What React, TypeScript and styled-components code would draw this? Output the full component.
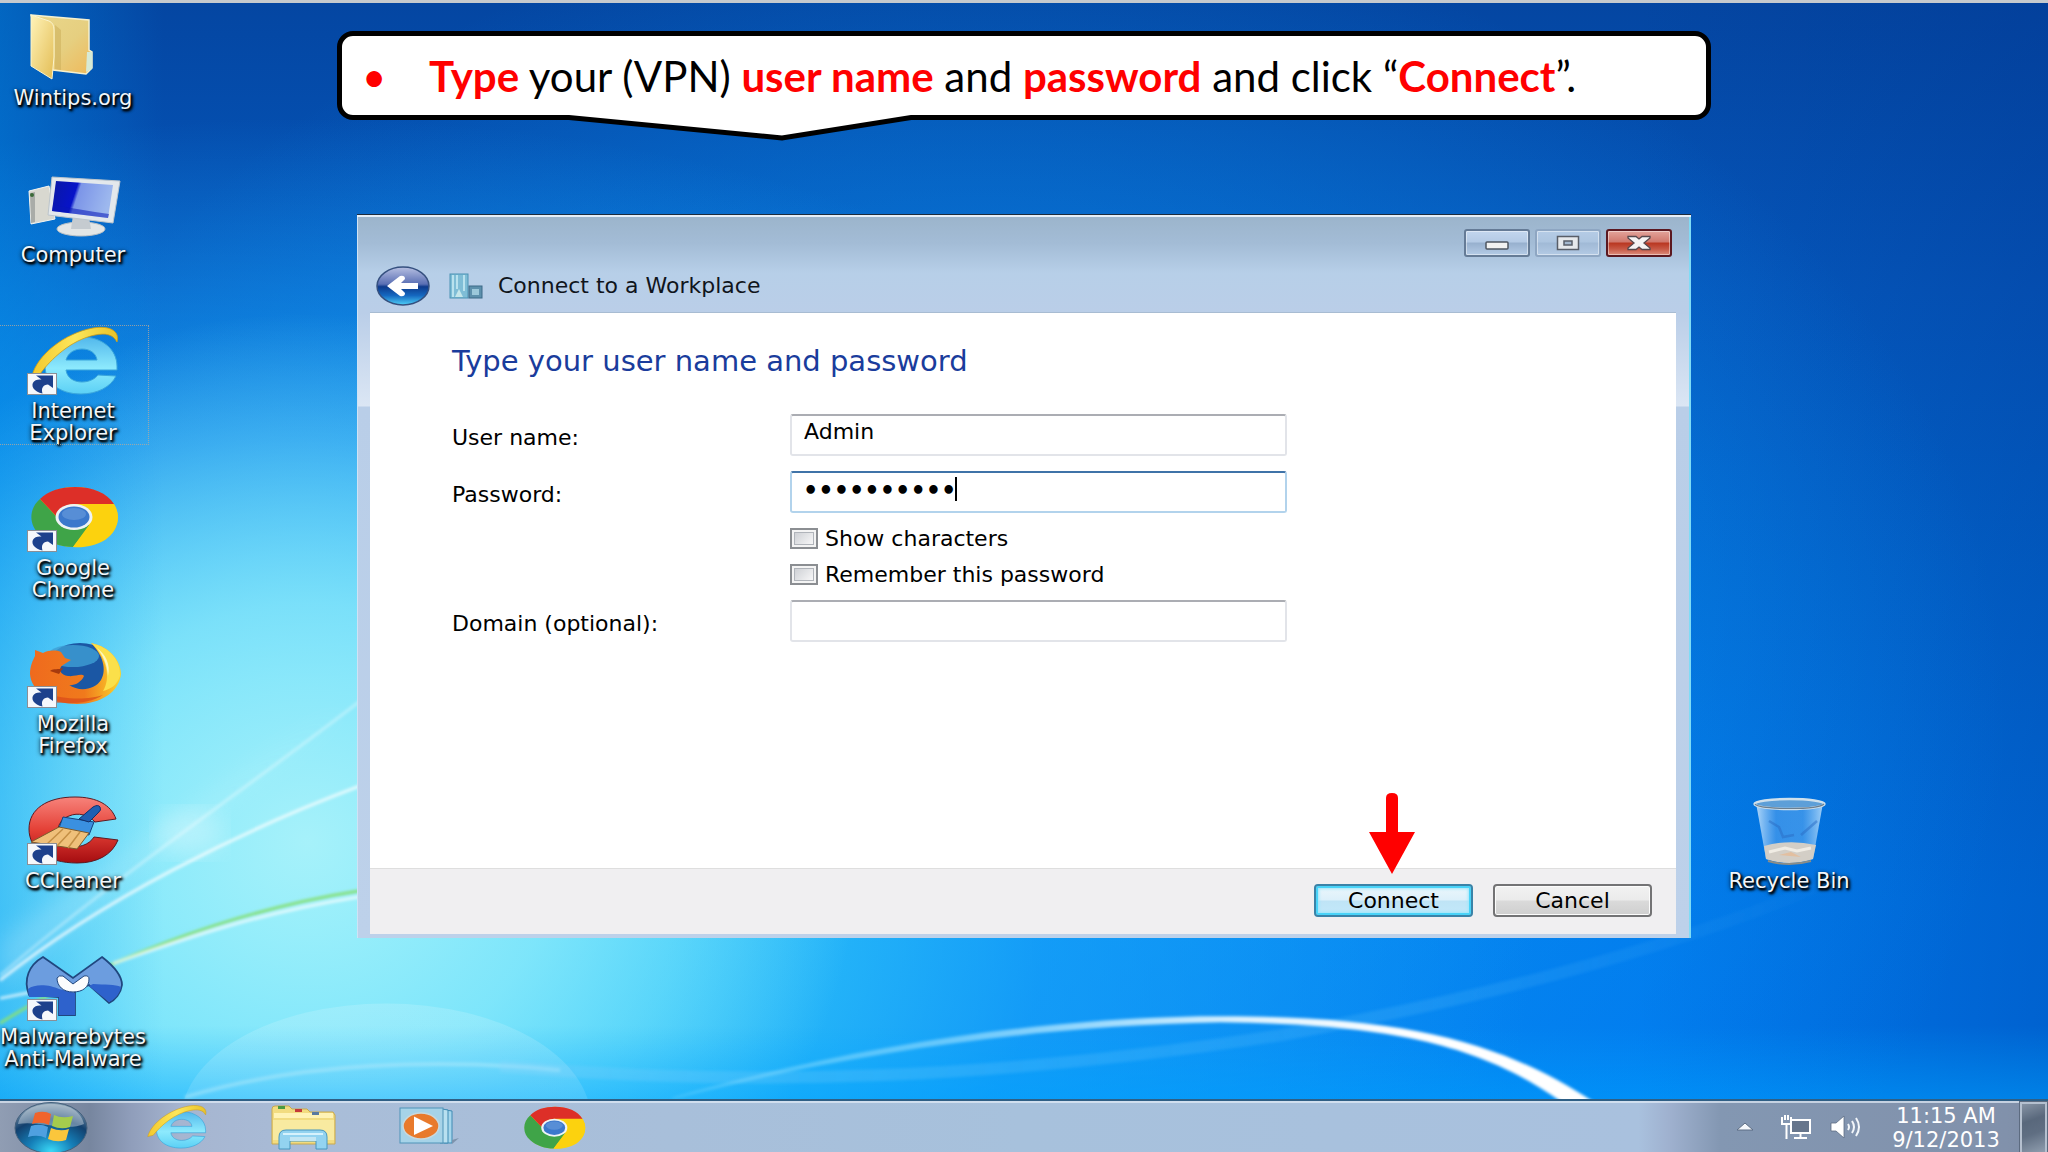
import React from 'react';
import styled, { createGlobalStyle, css } from 'styled-components';

const uiFont = '"DejaVu Sans", Verdana, sans-serif';

const GlobalStyle = createGlobalStyle`
  *, *::before, *::after { box-sizing: border-box; }
  body { margin: 0; font-family: ${uiFont}; }
`;

/* ---------- Desktop ---------- */

const Screen = styled.div`
  position: relative;
  display: flex;
  flex-direction: column;
  min-height: 100vh;
  overflow: hidden;
  isolation: isolate;
  border-top: 3px solid #c6cace;
  background:
    linear-gradient(90deg, rgba(0, 150, 240, 0.4) 0%, rgba(0, 150, 240, 0) 8%),
    linear-gradient(0deg, rgba(0, 165, 255, 0.5) 4%, rgba(0, 165, 255, 0) 11%),
    radial-gradient(ellipse 27% 46% at 15% 73%, rgba(178, 245, 250, 0.9) 0%, rgba(150, 238, 251, 0.75) 45%, rgba(100, 222, 250, 0) 100%),
    radial-gradient(ellipse 60% 70% at 15% 80%, rgba(60, 214, 252, 1) 0%, rgba(50, 200, 250, 0.95) 30%, rgba(26, 165, 250, 0.65) 60%, rgba(0, 130, 235, 0) 100%),
    radial-gradient(ellipse 50% 70% at 48% 62%, rgba(10, 150, 245, 0.9) 0%, rgba(10, 130, 235, 0) 100%),
    linear-gradient(90deg, rgba(0, 40, 120, 0) 80%, rgba(0, 50, 140, 0.3) 100%),
    linear-gradient(180deg, #0446a2 0%, #0558bd 25%, #0268d2 50%, #0076ea 78%, #0078f0 100%);
`;

const Wallpaper = styled.svg`
  position: absolute;
  inset: 0;
  width: 100%;
  height: 100%;
  z-index: -1;
`;

const Desktop = styled.main`
  flex: 1;
  display: grid;
  grid-template-columns: minmax(149px, 1fr) minmax(0, 1374px) minmax(154px, 1fr);
`;

const IconColumn = styled.nav<{ $indent?: number }>`
  display: grid;
  grid-template-rows: repeat(7, minmax(130px, 1fr));
  grid-template-columns: 149px;
  padding-left: ${(p) => p.$indent ?? 0}px;
`;

const Shortcut = styled.a<{ $selected?: boolean; $row?: number }>`
  display: flex;
  flex-direction: column;
  align-items: center;
  gap: 3px;
  padding-top: 9px;
  padding-right: 3px;
  color: #fff;
  text-decoration: none;
  position: relative;
  ${(p) => p.$row && css`grid-row: ${p.$row};`}
  ${(p) =>
    p.$selected &&
    css`
      &::after {
        content: '';
        position: absolute;
        inset: 9px 0 28px -2px;
        border: 1px dotted rgba(190, 170, 150, 0.75);
      }
    `}
`;

const ShortcutLabel = styled.span`
  font-size: 21px;
  line-height: 22px;
  text-align: center;
  white-space: pre;
  color: #f2f6fa;
  text-shadow: 1px 2px 2px #000, 2px 2px 3px #000, 0 1px 4px rgba(0, 0, 0, 0.8);
`;

const Stage = styled.section`
  display: flex;
  flex-direction: column;
  align-items: center;
  gap: 94px;
  padding: 28px 0 24px;
`;

/* ---------- Callout ---------- */

const Callout = styled.div`
  position: relative;
  width: 100%;
  min-height: 89px;
  display: flex;
  align-items: center;
  padding: 0 20px;
  background: #fff;
  border: 5px solid #000;
  border-radius: 16px;
`;

const CalloutList = styled.ul`
  margin: 0;
  padding: 0;
  list-style: none;
  font-family: Lato, Carlito, Calibri, sans-serif;
  font-size: 42px;
  line-height: 48px;
  color: #000;
`;

const CalloutItem = styled.li`
  display: flex;
  &::before {
    content: '•';
    flex: none;
    width: 67px;
    color: #f00;
  }
`;

const Key = styled.b`
  color: #f00;
  font-weight: 700;
`;

const CalloutTail = styled.svg`
  position: absolute;
  left: 222px;
  top: 76px;
`;

/* ---------- Dialog ---------- */

const Dialog = styled.section`
  position: relative;
  width: calc(100% - 40px);
  padding: 0 15px 4px 13px;
  border-top: 1px solid #1c2b3c;
  box-shadow: inset 0 2px 0 #e6eff8, inset -2px 0 0 #7fdcf6, inset 1px 0 0 #cfe3f5;
  background:
    linear-gradient(180deg, #9bb4cb 0, #a3bcd6 28px, #b7cfe8 58px, #bacee8 98px, transparent 98px),
    linear-gradient(180deg, #bacee8 98px, #dbe6f4 191px, #b9cee8 192px, #bdd1ea 100%);
`;

const TitleBar = styled.header`
  display: flex;
  flex-direction: column;
  gap: 9px;
  padding: 14px 4px 6px 6px;
`;

const WindowControls = styled.div`
  display: flex;
  justify-content: flex-end;
  gap: 5px;
`;

const WindowButton = styled.button<{ $tone?: 'close' | 'dim' }>`
  width: 66px;
  height: 28px;
  padding: 0;
  display: grid;
  place-items: center;
  border-radius: 3px;
  border: 2px solid ${(p) => (p.$tone === 'close' ? '#5b1820' : p.$tone === 'dim' ? '#8ea6c2' : '#657b96')};
  box-shadow: inset 0 0 0 1px rgba(255, 255, 255, 0.45);
  background: ${(p) =>
    p.$tone === 'close'
      ? 'linear-gradient(180deg, #e3a49b 0%, #d0776c 46%, #b93620 50%, #c75845 75%, #dd8d7c 100%)'
      : p.$tone === 'dim'
        ? 'linear-gradient(180deg, #b5cce6 0%, #adc5e0 46%, #a0b9d6 50%, #b3cae4 100%)'
        : 'linear-gradient(180deg, #c2d6ee 0%, #b4cae5 46%, #97b0ce 50%, #b4cbe6 100%)'};
`;

const NavRow = styled.div`
  display: flex;
  align-items: center;
`;

const BackButton = styled.button`
  width: 54px;
  height: 40px;
  margin-right: 19px;
  padding: 0;
  border: 0;
  background: none;
  display: block;
  & > svg { display: block; }
`;

const DialogTitle = styled.h1`
  margin: 0 0 0 15px;
  font-size: 22px;
  line-height: 28px;
  font-weight: 400;
  color: #10151c;
`;

const DialogBody = styled.div`
  min-height: 556px;
  padding: 30px 24px 30px 82px;
  background: #fff;
  border-top: 1px solid #a8bcd2;
`;

const Heading = styled.h2`
  margin: 0 0 35px;
  font-size: 29px;
  line-height: 36px;
  font-weight: 400;
  color: #1a3c9c;
`;

const Form = styled.form`
  display: grid;
  grid-template-columns: 338px minmax(0, 497px);
  row-gap: 15px;
  font-size: 22px;
  color: #000;
`;

const FieldLabel = styled.label`
  align-self: center;
  padding-top: 5px;
  line-height: 28px;
`;

const FieldWrap = styled.div`
  position: relative;
`;

const Field = styled.input<{ $active?: boolean }>`
  display: block;
  width: 100%;
  height: 42px;
  padding: ${(p) => (p.$active ? '0 11px 2px' : '0 12px 8px')};
  font-family: ${uiFont};
  font-size: ${(p) => (p.$active ? 24 : 22)}px;
  font-weight: ${(p) => (p.$active ? 700 : 400)};
  color: #000;
  background: #fff;
  border: 2px solid ${(p) => (p.$active ? '#b2d3ec' : '#e2e4e9')};
  border-top-color: ${(p) => (p.$active ? '#3f73a8' : '#abadb3')};
  border-radius: 3px;
  outline: none;
`;

const Caret = styled.span`
  position: absolute;
  left: 165px;
  top: 6px;
  width: 2px;
  height: 24px;
  background: #000;
`;

const Checks = styled.div`
  grid-column: 2;
  display: flex;
  flex-direction: column;
  gap: 15px;
`;

const CheckRow = styled.label`
  display: flex;
  align-items: center;
  gap: 7px;
  line-height: 21px;
`;

const CheckBox = styled.input`
  appearance: none;
  flex: none;
  width: 28px;
  height: 21px;
  margin: 0;
  border: 2px solid #8b8e92;
  box-shadow: inset 0 0 0 2px #f4f4f4, inset 0 0 0 3px #b0b4ba;
  background: linear-gradient(135deg, #c6c9ce, #f4f4f5 80%);
`;

const Footer = styled.footer`
  position: relative;
  display: flex;
  justify-content: flex-end;
  gap: 20px;
  padding: 15px 24px 17px;
  background: #f0eff1;
  border-top: 1px solid #dedede;
`;

const PushButton = styled.button<{ $primary?: boolean }>`
  width: 159px;
  height: 33px;
  padding: 0;
  font-family: ${uiFont};
  font-size: 22px;
  line-height: 28px;
  color: #000;
  border-radius: 4px;
  border: 2px solid ${(p) => (p.$primary ? '#3a83a8' : '#737375')};
  box-shadow: ${(p) =>
    p.$primary ? 'inset 0 0 0 2px #49d3f8, inset 0 0 3px 3px #9be6fb' : 'inset 0 0 0 1px #fcfcfc'};
  background: ${(p) =>
    p.$primary
      ? 'linear-gradient(180deg, #ecf6fb 0%, #dcf0fa 48%, #bfe4f6 52%, #c3e9fa 100%)'
      : 'linear-gradient(180deg, #f2f2f2 0%, #ebebeb 48%, #dadada 52%, #cfcfcf 100%)'};
`;

const Pointer = styled.svg`
  position: absolute;
  right: 261px;
  top: -77px;
`;

/* ---------- Taskbar ---------- */

const TaskBar = styled.footer`
  position: relative;
  display: flex;
  align-items: stretch;
  height: 53px;
  border-top: 2px solid #2f5f85;
  box-shadow: inset 0 2px 0 rgba(225, 235, 246, 0.7);
  background: linear-gradient(90deg, #909db3 0, #77869f 90px, #8f9dba 130px, #a6b5d0 180px, #a9bdd8 320px, #a7c1dc 50%, #a9c1de 80%, #9fb1cf 81.5%, #8397b2 84%, #8191ab 98%, #7c8ba3 100%);
`;

const TaskButton = styled.button<{ $start?: boolean }>`
  flex: none;
  width: ${(p) => (p.$start ? 114 : 126)}px;
  padding: ${(p) => (p.$start ? '1px 12px 0 0' : '3px 0 0')};
  border: 0;
  background: none;
  display: grid;
  place-items: start center;
  overflow: hidden;
`;

const Tray = styled.div`
  margin-left: auto;
  display: flex;
  align-items: center;
`;

const TrayButton = styled.button<{ $gap: number }>`
  padding: 0;
  margin-right: ${(p) => p.$gap}px;
  border: 0;
  background: none;
  & > svg { display: block; }
`;

const Clock = styled.time`
  width: 128px;
  font-size: 21px;
  line-height: 24px;
  padding-top: 3px;
  text-align: center;
  white-space: pre;
  color: #fff;
`;

const ShowDesktop = styled.button`
  align-self: stretch;
  width: 27px;
  margin: 1px 1px 0 10px;
  padding: 0;
  border: 2px solid #b5c0cf;
  border-bottom: 0;
  outline: 1px solid #5c6b80;
  background: linear-gradient(160deg, #8693a4 0%, #59687c 35%, #5f6e82 60%, #8f9dae 100%);
`;

/* ---------- Drawings ---------- */

const ShortcutArrow = () => (
  <g>
    <rect x="4.5" y="48.5" width="29" height="21" fill="#f5f8fc" stroke="#8b8f96" />
    <path d="M13 50.500H30V63L25 59.500C20 60 18 63 19.500 68.500C11 67 7 60.500 11 56.500C13 54.500 16 54.500 18.500 54.500Z" fill="#1d418c" />
  </g>
);

const IconBox = ({ children, shortcut }: { children: React.ReactNode; shortcut?: boolean }) => (
  <svg width="100" height="72" viewBox="0 0 100 72" aria-hidden="true">
    {children}
    {shortcut && <ShortcutArrow />}
  </svg>
);

const FolderArt = () => (
  <IconBox>
    <defs>
      <linearGradient id="fold-a" x1="0" y1="0" x2="1" y2="1">
        <stop offset="0" stopColor="#fff3b8" />
        <stop offset="1" stopColor="#e3bd55" />
      </linearGradient>
      <linearGradient id="fold-b" x1="0" y1="0" x2="1" y2="1">
        <stop offset="0" stopColor="#e9d78c" />
        <stop offset=".55" stopColor="#e6cf80" />
        <stop offset="1" stopColor="#efb95a" />
      </linearGradient>
    </defs>
    <path d="M8 3L66 8V38L69 40V56L63 62L30 58Z" fill="url(#fold-b)" stroke="#f6f1cf" strokeWidth="1.500" />
    <path d="M64 40H69V57L63 60Z" fill="#d6ead6" />
    <path d="M32 13V57L38 58V18Z" fill="#c9ab55" opacity=".5" />
    <path d="M8 3L26 9Q31 11 31 18V45L29 67L8 54Z" fill="url(#fold-a)" stroke="#fbf4cd" />
  </IconBox>
);

const ComputerArt = () => (
  <IconBox>
    <defs>
      <linearGradient id="pc-s" x1="0" y1="0" x2="1" y2=".2">
        <stop offset="0" stopColor="#0a18a4" />
        <stop offset=".42" stopColor="#0713c9" />
        <stop offset=".48" stopColor="#7c95e8" />
        <stop offset="1" stopColor="#9db8ee" />
      </linearGradient>
    </defs>
    <path d="M6 22L26 17L32 50L8 55Z" fill="#d8d8d0" stroke="#f5f5f0" />
    <path d="M7 24L12 23V53L8 54Z" fill="#a9aca8" />
    <circle cx="9" cy="26" r="2" fill="#3a6a38" />
    <ellipse cx="58" cy="60" rx="24" ry="7" fill="#e3e6e6" stroke="#b9c0c4" />
    <path d="M50 46L66 48L68 60H48Z" fill="#c5cbd0" />
    <path d="M29 8L97 12L90 54L25 46Z" fill="#e3e8ec" stroke="#bcc5cc" />
    <path d="M33 12L90 16L85 49L29 42Z" fill="url(#pc-s)" />
    <path d="M72 43L86 45L85 49L29 42L30 36Z" fill="#0a18b8" opacity=".55" />
  </IconBox>
);

const IEShape = () => (
  <>
    <path
      d="M94 45H43C44 53 51 57 59 57C66 57 72 54 75 50L93 51C88 62 74 69 58 69C36 69 22 57 22 41C22 25 38 12 59 12C80 12 94 25 94 41ZM43 35H74C73 28 67 24 59 24C51 24 45 28 43 35Z"
      fill="url(#ie-b)"
      stroke="#3aa6dc"
    />
    <path d="M9 51C14 30 42 8 70 3C88 0 97 7 94 17C90 9 82 8 72 10C48 15 28 34 17 49Z" fill="url(#ie-y)" stroke="#cf9c14" strokeWidth=".8" />
    <defs>
      <linearGradient id="ie-b" x1="0" y1="0" x2="0" y2="1">
        <stop offset="0" stopColor="#52b8ec" />
        <stop offset=".55" stopColor="#8deafd" />
        <stop offset="1" stopColor="#5bd0f5" />
      </linearGradient>
      <linearGradient id="ie-y" x1="0" y1="0" x2="1" y2="0">
        <stop offset="0" stopColor="#f4c92c" />
        <stop offset=".5" stopColor="#fde65a" />
        <stop offset="1" stopColor="#e8c228" />
      </linearGradient>
    </defs>
  </>
);

const ChromeShape = () => (
  <>
    <ellipse cx="52" cy="35" rx="43" ry="30" fill="#fcd20e" />
    <path d="M17 17C6 26 5 43 17 53C26 61 38 65 50 65L66 43L52 35L33 34Z" fill="#3fa448" />
    <path d="M50 65L68 42L72 22H91C99 36 94 50 82 58C72 64 60 66 50 65Z" fill="#fcd20e" />
    <path d="M17 17C25 9 37 5 52 5C70 5 84 11 91 22H52C42 22 34 28 34 35Z" fill="#dd2f28" />
    <ellipse cx="51" cy="35" rx="18.500" ry="13" fill="#eef3f5" />
    <ellipse cx="51" cy="35" rx="15.500" ry="10.500" fill="#3b78cc" />
    <ellipse cx="51" cy="32" rx="12" ry="6" fill="#6a9cdc" opacity=".6" />
  </>
);

const FirefoxArt = () => (
  <IconBox shortcut>
    <defs>
      <linearGradient id="ff-o" x1="0" y1="0" x2="1" y2="0">
        <stop offset="0" stopColor="#ef6a1e" />
        <stop offset=".6" stopColor="#f07a1c" />
        <stop offset="1" stopColor="#fbd52c" />
      </linearGradient>
    </defs>
    <ellipse cx="57" cy="29" rx="33" ry="24" fill="#1b57a4" />
    <ellipse cx="50" cy="18" rx="26" ry="11" fill="#3f9fd4" opacity=".8" />
    <path
      d="M12 12L20 15C26 12 33 12 38 14L42 20L48 22L40 27C34 31 38 37 45 38C52 39 58 35 61 38C58 45 50 48 46 47C56 54 72 52 78 42C84 32 80 17 68 5C88 9 98 24 98 36C96 54 78 66 54 66C26 66 8 52 7 36C7 28 10 22 12 18Z"
      fill="url(#ff-o)"
    />
    <path d="M68 5C88 9 98 24 97 38C94 47 88 51 80 53C88 40 84 20 68 5Z" fill="#fbe04a" />
    <path d="M74 10C82 16 88 26 85 38C84 26 80 17 74 10Z" fill="#fdf6c0" />
    <path d="M20 62C34 66 64 68 80 57C66 62 40 62 24 55Z" fill="#d9481a" opacity=".7" />
    <path d="M27 33C31 30 35 32 40 30L36 36Z" fill="#a63a0e" />
  </IconBox>
);

const CCleanerArt = () => (
  <IconBox shortcut>
    <defs>
      <linearGradient id="cc-r" x1="0" y1="0" x2="0" y2="1">
        <stop offset="0" stopColor="#f7837b" />
        <stop offset=".5" stopColor="#e44036" />
        <stop offset="1" stopColor="#a50c10" />
      </linearGradient>
    </defs>
    <path
      d="M93 24L72 27C66 20 55 17 46 21C32 26 31 44 44 50C55 54 66 50 71 42L95 45C89 60 74 68 54 68C24 68 6 54 6 34C6 14 24 2 52 2C74 2 88 10 93 24Z"
      fill="url(#cc-r)"
      stroke="#5c1a22"
    />
    <path d="M40 22L71 27L66 40L36 33Z" fill="#3a90e0" stroke="#12417e" />
    <path d="M56 24L70 12Q75 9 77 12Q79 15 75 18L66 27Z" fill="#1f5fb2" stroke="#12306a" />
    <path d="M36 32L66 38L54 54L8 47Z" fill="#efc07a" stroke="#7c5a2c" />
    <path d="M40 34L24 49M48 36L34 51M57 37L45 53" stroke="#c48f45" strokeWidth="1.500" />
  </IconBox>
);

const MalwarebytesArt = () => (
  <IconBox shortcut>
    <path d="M20 6L50 27L79 6C92 16 99 26 99 34C98 42 92 49 86 52L66 34L52 40V64H36V46L6 44C0 28 6 14 20 6Z" fill="#6c9ddf" stroke="#20477f" strokeWidth="1.800" />
    <path d="M5 38C12 32 28 34 36 38L52 42V64H36V46L6 46ZM70 33C82 34 92 33 98 36C97 43 91 49 86 51L66 35Z" fill="#2e62cc" />
    <path d="M34 27Q36 24 40 25L50 33L61 25Q66 24 66 28C66 36 60 41 50 41C40 41 34 35 34 27Z" fill="#fbfcfd" stroke="#20477f" />
  </IconBox>
);

const RecycleArt = () => (
  <IconBox>
    <defs>
      <linearGradient id="rb-g" x1="0" y1="0" x2="1" y2="0">
        <stop offset="0" stopColor="#b9dcfa" stopOpacity=".95" />
        <stop offset=".3" stopColor="#4a9cec" stopOpacity=".7" />
        <stop offset=".7" stopColor="#5aa8f0" stopOpacity=".6" />
        <stop offset="1" stopColor="#a9d4f8" stopOpacity=".95" />
      </linearGradient>
    </defs>
    <path d="M17 8L27 64Q50 72 74 64L84 8Z" fill="url(#rb-g)" />
    <path d="M25 51Q50 44 77 50L74 64Q50 72 27 64Z" fill="#d3cec6" />
    <path d="M30 57L46 53L58 56L72 53" stroke="#f0ece4" strokeWidth="3" fill="none" />
    <path d="M40 60L52 57L62 62Z" fill="#e2bfa0" />
    <path d="M30 26L40 32L44 42L55 40M62 40L78 26" stroke="#2a6cc4" strokeWidth="2.500" fill="none" opacity=".5" />
    <ellipse cx="50.500" cy="9" rx="35" ry="5" fill="#5d9fd8" stroke="#cfe0ec" strokeWidth="2.500" />
    <path d="M16 9C20 15 80 15 85 9" stroke="#6b7f90" strokeWidth="1.200" fill="none" />
    <path d="M29 66Q50 72 72 66" stroke="#8b8d88" strokeWidth="2" fill="none" />
  </IconBox>
);

const WallpaperArt = () => (
  <Wallpaper viewBox="0 0 2048 1152" preserveAspectRatio="none" aria-hidden="true">
    <defs>
      <linearGradient id="wp-arc" x1="0" y1="0" x2="1" y2="0">
        <stop offset="0" stopColor="#9fe6ff" stopOpacity=".25" />
        <stop offset=".3" stopColor="#9fe2ff" stopOpacity=".6" />
        <stop offset=".62" stopColor="#e8f7ff" stopOpacity=".95" />
        <stop offset=".8" stopColor="#fff" />
      </linearGradient>
      <linearGradient id="wp-bub" x1="0" y1="0" x2="0" y2="1">
        <stop offset="0" stopColor="#fff" stopOpacity=".16" />
        <stop offset="1" stopColor="#fff" stopOpacity=".04" />
      </linearGradient>
      <linearGradient id="wp-band" gradientUnits="userSpaceOnUse" x1="500" y1="0" x2="1860" y2="0">
        <stop offset="0" stopColor="#7ad0fb" stopOpacity=".3" />
        <stop offset=".7" stopColor="#5cc0fa" stopOpacity=".2" />
        <stop offset="1" stopColor="#5cc0fa" stopOpacity="0" />
      </linearGradient>
      <filter id="wp-soft"><feGaussianBlur stdDeviation="1.500" /></filter>
      <filter id="wp-glow"><feGaussianBlur stdDeviation="12" /></filter>
    </defs>
    <path d="M356 700C240 790 150 850 60 930L0 990V940C120 860 240 780 356 700Z" fill="#fff" opacity=".2" filter="url(#wp-glow)" />
    <ellipse cx="190" cy="832" rx="34" ry="24" fill="#fff" opacity=".28" filter="url(#wp-glow)" />
    <g fill="none" filter="url(#wp-soft)">
      <path d="M360 700C250 785 110 880 0 975" stroke="#fff" strokeOpacity=".35" strokeWidth="3" />
      <path d="M360 785C240 830 100 900 0 980" stroke="#fff" strokeOpacity=".75" strokeWidth="3" />
      <path d="M360 890C230 910 90 965 0 1023" stroke="#86e07a" strokeWidth="3" />
      <path d="M360 896C260 912 190 936 113 963" stroke="#fff" strokeOpacity=".7" strokeWidth="3" />
      <path d="M40 990L0 998" stroke="#fff" strokeOpacity=".7" strokeWidth="3" />
      <path d="M185 1097C300 1062 440 1058 560 1070" stroke="#a8e8fc" strokeOpacity=".5" strokeWidth="4" />
      <path d="M500 1066C760 1088 1000 1078 1280 1035C1500 995 1700 940 1860 868" stroke="url(#wp-band)" strokeWidth="12" />
    </g>
    <ellipse cx="386" cy="1120" rx="205" ry="117" fill="url(#wp-bub)" />
    <path
      d="M670 1098C830 1052 1010 1020 1200 1016C1400 1014 1500 1040 1594 1102H1562C1480 1044 1390 1024 1220 1022C1020 1026 840 1056 676 1098Z"
      fill="url(#wp-arc)"
      filter="url(#wp-soft)"
    />
  </Wallpaper>
);

const StartArt = () => (
  <svg width="76" height="52" viewBox="0 0 76 52" aria-hidden="true">
    <defs>
      <radialGradient id="orb" cx=".5" cy=".95" r=".9">
        <stop offset="0" stopColor="#3ad8f6" />
        <stop offset=".35" stopColor="#157fb8" />
        <stop offset=".7" stopColor="#12406e" />
        <stop offset="1" stopColor="#7d97ac" />
      </radialGradient>
    </defs>
    <ellipse cx="38" cy="26" rx="36" ry="25.500" fill="url(#orb)" stroke="#44607c" />
    <path d="M5 22C8 8 22 2 38 2S68 8 71 22C54 30 24 18 5 22Z" fill="#dfe8ee" opacity=".42" />
    <path d="M22 11Q31 8 38 12L36 23Q28 19 19 22Z" fill="#f0642c" />
    <path d="M41 13Q49 17 60 14L57 25Q48 28 39 24Z" fill="#a5cc4d" />
    <path d="M18 24Q27 21 35 25L33 36Q25 32 15 35Z" fill="#4fa0e0" />
    <path d="M38 26Q47 30 56 27L53 38Q44 41 35 37Z" fill="#fbc63c" />
  </svg>
);

const LibraryArt = () => (
  <svg width="68" height="46" viewBox="0 0 68 46" aria-hidden="true">
    <path d="M3 5Q3 2 6 2H20L23 5H38L41 8H64L66 11V40H3Z" fill="#f2dc80" stroke="#c9a94e" />
    <path d="M5 9H64V14H5Z" fill="#fff3b5" />
    <path d="M4 16H65V36H4Z" fill="#f8eaa0" />
    <rect x="9" y="2" width="7" height="3" fill="#4a9a40" />
    <rect x="26" y="5" width="7" height="3" fill="#c43a3a" />
    <rect x="43" y="8" width="7" height="3" fill="#5a7aa0" />
    <path d="M10 45V33Q10 26 17 26H51Q58 26 58 33V45H47V37H21V45Z" fill="#93d3f0" stroke="#4796bf" />
    <path d="M14 30H54" stroke="#d6f2fc" strokeWidth="2" />
    <path d="M21 37H47V33H21Z" fill="#c2e6f4" />
  </svg>
);

const MediaArt = () => (
  <svg width="62" height="42" viewBox="0 0 62 42" aria-hidden="true">
    <path d="M48 6L54 7V39H46Z" fill="#a5d6ec" stroke="#3f8bb4" />
    <path d="M44 5L50 6V39H42Z" fill="#b8e0f0" stroke="#3f8bb4" />
    <rect x="2" y="4" width="43" height="35" fill="#a6d3e8" stroke="#4f93b8" />
    <path d="M54 36L61 34L54 40Z" fill="#7d93ac" />
    <ellipse cx="23" cy="22" rx="18" ry="13" fill="#e87a2c" stroke="#c8d8dc" strokeWidth="1.500" />
    <path d="M16 12.500L35 22L16 31Z" fill="#fff" />
  </svg>
);

const shortcuts = [
  { label: 'Wintips.org', art: <FolderArt /> },
  { label: 'Computer', art: <ComputerArt /> },
  { label: 'Internet\nExplorer', art: <IconBox shortcut><IEShape /></IconBox>, selected: true },
  { label: 'Google\nChrome', art: <IconBox shortcut><ChromeShape /></IconBox> },
  { label: 'Mozilla\nFirefox', art: <FirefoxArt /> },
  { label: 'CCleaner', art: <CCleanerArt /> },
  { label: 'Malwarebytes\nAnti-Malware', art: <MalwarebytesArt /> },
];

const ConnectDialog = () => (
  <Dialog role="dialog" aria-labelledby="dialog-title">
    <TitleBar>
      <WindowControls>
        <WindowButton type="button" aria-label="Minimize">
          <svg width="24" height="16" viewBox="0 0 24 16">
            <rect x="1" y="7" width="22" height="7" rx="1" fill="#f1f1f1" stroke="#4e5560" strokeWidth="1.500" />
          </svg>
        </WindowButton>
        <WindowButton type="button" aria-label="Maximize" $tone="dim">
          <svg width="24" height="16" viewBox="0 0 24 16">
            <rect x="1.500" y="1.500" width="21" height="13" fill="#e6e9ec" stroke="#585e68" strokeWidth="1.500" />
            <rect x="8" y="6" width="8" height="4" fill="#a4b8ce" stroke="#585e68" strokeWidth="1.500" />
          </svg>
        </WindowButton>
        <WindowButton type="button" aria-label="Close" $tone="close">
          <svg width="24" height="16" viewBox="0 0 24 16">
            <path d="M1 1.500H9L12 4L15 1.500H23V3L17 8L23 13V14.500H15L12 12L9 14.500H1V13L7 8L1 3Z" fill="#f6f4f4" stroke="#56474c" strokeWidth="1.300" />
          </svg>
        </WindowButton>
      </WindowControls>
      <NavRow>
        <BackButton type="button" aria-label="Back">
          <svg width="54" height="40" viewBox="0 0 54 40">
            <defs>
              <linearGradient id="back" x1="0" y1="0" x2="0" y2="1">
                <stop offset="0" stopColor="#b7c0e2" />
                <stop offset=".45" stopColor="#5a6fb4" />
                <stop offset=".52" stopColor="#0d3a8c" />
                <stop offset=".75" stopColor="#1568c0" />
                <stop offset="1" stopColor="#4fd0f8" />
              </linearGradient>
            </defs>
            <ellipse cx="27" cy="20" rx="26" ry="19" fill="url(#back)" stroke="#35507f" strokeWidth="1.500" />
            <path d="M11 20L24 10Q29 9 29 13L25 17H42V23H25L29 27Q29 31 24 30Z" fill="#fff" />
          </svg>
        </BackButton>
        <svg width="34" height="26" viewBox="0 0 34 26" aria-hidden="true">
          <rect x="1" y="1" width="18" height="24" fill="#7fbdd6" stroke="#4c93b4" />
          <path d="M4 2V24M8 2V16M15 2V18" stroke="#b9e2ee" strokeWidth="2" />
          <path d="M6 24L10 16L14 24Z" fill="#c5e6ea" />
          <rect x="20" y="13" width="13" height="12" fill="#5d90ac" stroke="#3c6a88" />
          <rect x="23" y="16" width="7" height="6" fill="#9cc8da" />
        </svg>
        <DialogTitle id="dialog-title">Connect to a Workplace</DialogTitle>
      </NavRow>
    </TitleBar>
    <DialogBody>
      <Heading>Type your user name and password</Heading>
      <Form id="credentials" onSubmit={(e) => e.preventDefault()}>
        <FieldLabel htmlFor="user">User name:</FieldLabel>
        <Field id="user" type="text" defaultValue="Admin" autoComplete="off" />
        <FieldLabel htmlFor="pass">Password:</FieldLabel>
        <FieldWrap>
          <Field id="pass" type="password" defaultValue="abcdefghij" autoComplete="off" $active />
          <Caret />
        </FieldWrap>
        <Checks>
          <CheckRow>
            <CheckBox type="checkbox" />
            Show characters
          </CheckRow>
          <CheckRow>
            <CheckBox type="checkbox" />
            Remember this password
          </CheckRow>
        </Checks>
        <FieldLabel htmlFor="domain">Domain (optional):</FieldLabel>
        <Field id="domain" type="text" autoComplete="off" />
      </Form>
    </DialogBody>
    <Footer>
      <PushButton type="submit" form="credentials" $primary>Connect</PushButton>
      <PushButton type="button">Cancel</PushButton>
      <Pointer width="46" height="82" viewBox="0 0 46 82" aria-hidden="true">
        <path d="M17 6Q17 1 23 1T29 6V40H46L23 82L0 40H17Z" fill="#f00" />
      </Pointer>
    </Footer>
  </Dialog>
);

export default function App() {
  return (
    <Screen>
      <GlobalStyle />
      <WallpaperArt />
      <Desktop>
        <IconColumn aria-label="Desktop shortcuts">
          {shortcuts.map((s) => (
            <Shortcut key={s.label} href="#" $selected={s.selected}>
              {s.art}
              <ShortcutLabel>{s.label}</ShortcutLabel>
            </Shortcut>
          ))}
        </IconColumn>
        <Stage>
          <Callout>
            <CalloutList>
              <CalloutItem>
                <span>
                  <Key>Type</Key> your (VPN) <Key>user name</Key> and <Key>password</Key> and click “<Key>Connect</Key>”.
                </span>
              </CalloutItem>
            </CalloutList>
            <CalloutTail width="360" height="34" viewBox="0 0 360 34" aria-hidden="true">
              <path d="M5 0V5L218 26L347 5V0Z" fill="#fff" />
              <path d="M0 5.500H5L218 26L347 5.500H352" fill="none" stroke="#000" strokeWidth="5" />
            </CalloutTail>
          </Callout>
          <ConnectDialog />
        </Stage>
        <IconColumn $indent={5} aria-label="System shortcuts">
          <Shortcut href="#" $row={6}>
            <RecycleArt />
            <ShortcutLabel>Recycle Bin</ShortcutLabel>
          </Shortcut>
        </IconColumn>
      </Desktop>
      <TaskBar>
        <TaskButton type="button" aria-label="Start" $start><StartArt /></TaskButton>
        <TaskButton type="button" aria-label="Internet Explorer">
          <svg width="64" height="46" viewBox="5 0 94 72" preserveAspectRatio="none"><IEShape /></svg>
        </TaskButton>
        <TaskButton type="button" aria-label="Libraries"><LibraryArt /></TaskButton>
        <TaskButton type="button" aria-label="Media Player"><MediaArt /></TaskButton>
        <TaskButton type="button" aria-label="Google Chrome">
          <svg width="62" height="46" viewBox="8 1 88 66" preserveAspectRatio="none"><ChromeShape /></svg>
        </TaskButton>
        <Tray>
          <TrayButton type="button" aria-label="Show hidden icons" $gap={26}>
            <svg width="18" height="10" viewBox="0 0 18 10"><path d="M1 8L9 1L17 8Z" fill="#f4f7fb" stroke="#5d6d84" /></svg>
          </TrayButton>
          <TrayButton type="button" aria-label="Network" $gap={16}>
            <svg width="33" height="26" viewBox="0 0 33 26">
              <rect x="11" y="6" width="19" height="13" fill="#67768c" stroke="#fff" strokeWidth="2" />
              <path d="M14 24H27M20.500 20V24" stroke="#fff" strokeWidth="2" />
              <path d="M2 3V10H11V3M5 1V6M8 1V6M6.500 10V25" stroke="#fff" strokeWidth="2" fill="none" />
            </svg>
          </TrayButton>
          <TrayButton type="button" aria-label="Volume" $gap={19}>
            <svg width="34" height="26" viewBox="0 0 34 26">
              <path d="M2 9H7L15 2V24L7 17H2Z" fill="#fff" stroke="#5d6d84" strokeWidth=".8" />
              <path d="M19 10Q21 13 19 16M23 7Q27 13 23 19M27 4Q33 13 27 22" stroke="#f2f6fa" strokeWidth="2" fill="none" />
            </svg>
          </TrayButton>
          <Clock>{'11:15 AM\n9/12/2013'}</Clock>
          <ShowDesktop type="button" aria-label="Show desktop" />
        </Tray>
      </TaskBar>
    </Screen>
  );
}
